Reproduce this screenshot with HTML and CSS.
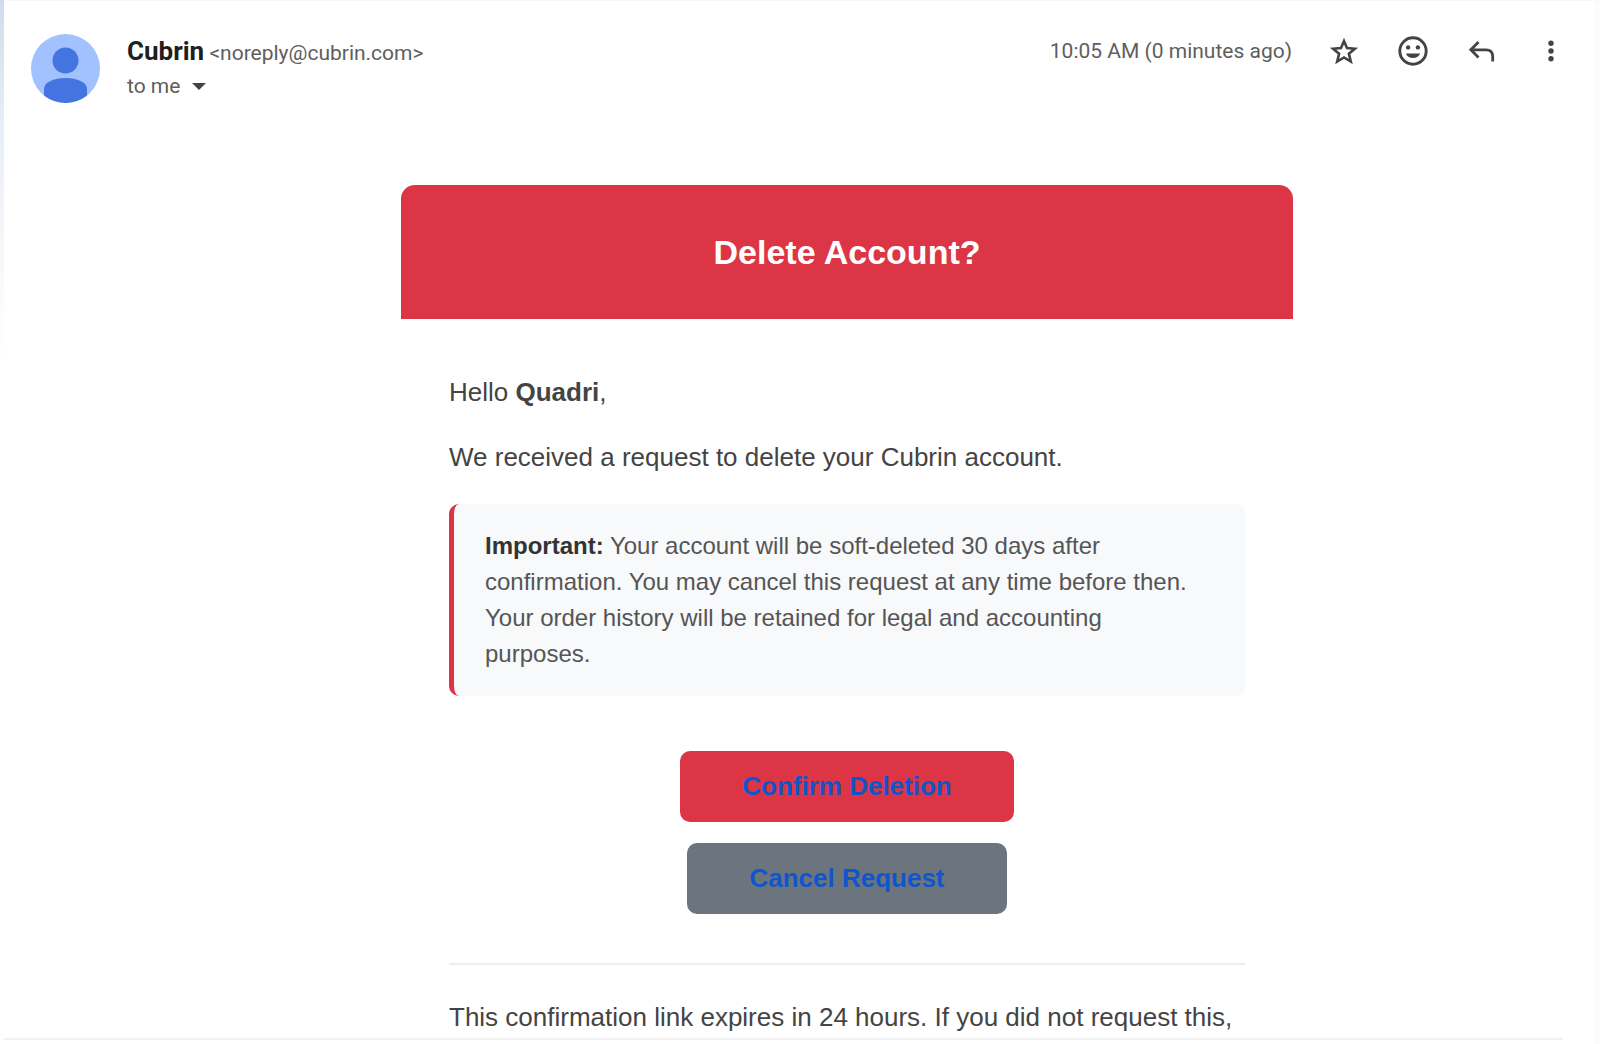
FILE: index.html
```html
<!DOCTYPE html>
<html lang="en">
  <head>
    <meta charset="UTF-8" />
    <meta name="viewport" content="width=device-width, initial-scale=1.0" />
    <title>Delete Account?</title>
    <link rel="stylesheet" href="styles.css">
  </head>

  <body>
    <main class="mail">
      <header class="mail-header">
        <svg class="avatar" viewBox="0 0 69 69" aria-hidden="true">
          <circle cx="34.5" cy="34.5" r="34.5" fill="#a1c2fe" />
          <circle cx="34.5" cy="26.5" r="13" fill="#4374e0" />
          <path d="M13 61.500V55C13 48 23 44 34.500 44S56 48 56 55v6.500A34.500 34.500 0 0 1 13 61.500z" fill="#4374e0" />
        </svg>
        <div class="sender">
          <div class="from"><strong>Cubrin</strong> <span class="email">&lt;noreply@cubrin.com&gt;</span></div>
          <button class="to" type="button">to me
            <svg class="caret" viewBox="0 0 14 7" aria-hidden="true"><path d="M0 0h14L7 7z" /></svg>
          </button>
        </div>
        <time class="date">10:05 AM (0 minutes ago)</time>
        <div class="actions">
          <button class="icon" type="button" aria-label="Star">
            <svg viewBox="0 0 34 34"><path d="M17 7l3 7.100 7.900.7-6 5 1.900 7.700-6.800-4.100-6.800 4.100 1.900-7.700-6-5 7.900-.7z" fill="none" stroke="currentColor" stroke-width="2.600" /></svg>
          </button>
          <button class="icon" type="button" aria-label="Add reaction">
            <svg viewBox="0 0 34 34">
              <circle cx="17" cy="17" r="13.200" fill="none" stroke="currentColor" stroke-width="2.900" />
              <circle cx="12.100" cy="13.400" r="2.200" />
              <circle cx="21.900" cy="13.400" r="2.200" />
              <path d="M10 19.600h14a7.200 5.800 0 0 1-14 0z" />
            </svg>
          </button>
          <button class="icon" type="button" aria-label="Reply">
            <svg viewBox="0 0 34 34"><path d="M13.500 8L5.800 15.800l7.700 7.800M5.800 15.800H21q6.700 0 6.700 6.700V27.500" fill="none" stroke="currentColor" stroke-width="2.800" /></svg>
          </button>
          <button class="icon" type="button" aria-label="More">
            <svg viewBox="0 0 34 34"><circle cx="17" cy="9.200" r="2.700" /><circle cx="17" cy="17" r="2.700" /><circle cx="17" cy="24.800" r="2.700" /></svg>
          </button>
        </div>
      </header>

      <div class="mail-body">
        <article class="message">
          <h1 class="banner">Delete Account?</h1>
          <div class="content">
            <p>Hello <strong>Quadri</strong>,</p>
            <p>We received a request to delete your Cubrin account.</p>
            <p class="notice"><strong>Important:</strong> Your account will be soft-deleted 30 days after confirmation. You may cancel this request at any time before then. Your order history will be retained for legal and accounting purposes.</p>
            <div class="buttons">
              <a class="btn btn-danger" href="#">Confirm Deletion</a>
              <a class="btn btn-cancel" href="#">Cancel Request</a>
            </div>
            <hr>
            <p class="expires">This confirmation link expires in 24 hours. If you did not request this,</p>
          </div>
        </article>
      </div>
    </main>
  </body>
</html>
```

FILE: styles.css
```css
* {
  box-sizing: border-box;
}

body {
  margin: 0;
  padding-left: 4px;
  background: linear-gradient(#cfdcea, #e6eef7 120px, #f8f8fa 260px, #fff 360px);
  font-family: "Liberation Sans", Arial, sans-serif;
  color: #444;
}

.mail {
  min-height: 100vh;
  border-top: 1px solid #f6f8fb;
  border-right: 5px solid #fbfcfe;
  background: #fff;
}

.mail-header {
  display: flex;
  align-items: flex-start;
  padding: 33px 27px 0;
  font-family: Roboto, sans-serif;
  font-size: 21px;
  line-height: 35px;
  color: #5e5e5e;
}

.avatar {
  width: 69px;
  height: 69px;
  margin-right: 27px;
}

.sender {
  flex: 1;
}

.from {
  height: 35px;
}

.from strong {
  font-size: 26px;
  color: #1f1f1f;
}

.to {
  display: flex;
  align-items: center;
  gap: 12px;
  padding: 0;
  border: 0;
  background: none;
  font: inherit;
  color: inherit;
}

.caret {
  width: 14px;
  height: 7px;
  fill: #444;
}

.actions {
  display: flex;
  gap: 35px;
  margin-left: 35px;
}

.icon {
  width: 34px;
  height: 34px;
  padding: 0;
  border: 0;
  background: none;
  color: #444;
}

.icon svg {
  display: block;
  fill: currentColor;
}

.mail-body {
  margin: 81px 32px 0 0;
  padding-left: 127px;
  border-bottom: 2px solid #f1f1f1;
}

.message {
  max-width: 892px;
  margin: 0 auto;
}

.banner {
  margin: 0;
  padding: 40px;
  border-radius: 14px 14px 0 0;
  background: #dc3545;
  color: #fff;
  font-size: 34px;
  line-height: 54px;
  text-align: center;
}

.content {
  padding: 53px 48px 0;
  font-size: 26px;
  line-height: 41px;
}

.content p {
  margin: 0 0 24px;
}

.content .notice {
  margin: 26px 0 55px;
  padding: 24px 34px 24px 31px;
  border-left: 5px solid #dc3545;
  border-radius: 10px;
  background: #f8f9fb;
  color: #555;
  font-size: 24px;
  line-height: 36px;
}

.notice strong {
  color: #333;
}

.buttons {
  display: flex;
  flex-direction: column;
  align-items: center;
  gap: 21px;
}

.btn {
  padding: 15px 62px;
  border-radius: 10px;
  color: #15c;
  font-weight: bold;
  text-decoration: none;
}

.btn-danger {
  background: #dc3545;
}

.btn-cancel {
  background: #6c757d;
}

hr {
  margin: 49px 0 32px;
  border: 0;
  border-top: 2px solid #eee;
}

.content .expires {
  margin: 0;
}
```
